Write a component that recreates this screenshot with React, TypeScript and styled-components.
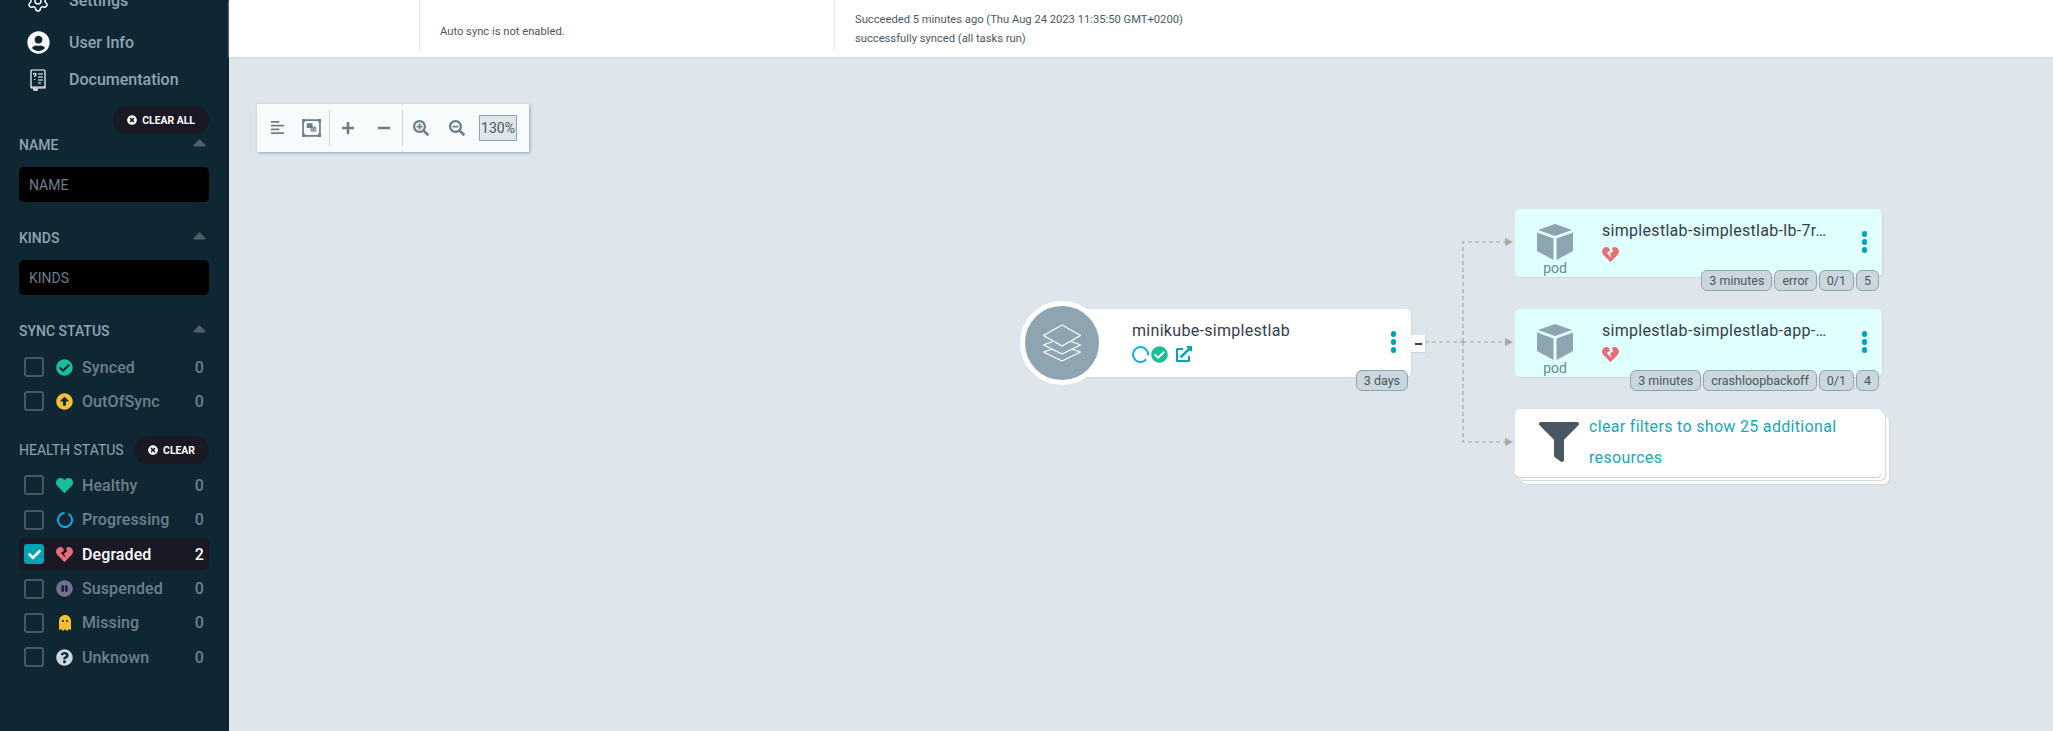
import React from 'react';
import styled, { createGlobalStyle } from 'styled-components';
import {
  FaAlignLeft,
  FaArrowAltCircleUp,
  FaCaretUp,
  FaCheck,
  FaCheckCircle,
  FaExternalLinkAlt,
  FaFilter,
  FaGhost,
  FaHeart,
  FaHeartBroken,
  FaMinus,
  FaPauseCircle,
  FaPlus,
  FaQuestionCircle,
  FaSearchMinus,
  FaSearchPlus,
  FaTimesCircle,
  FaUserCircle,
} from 'react-icons/fa';
import { Settings } from 'lucide-react';

const GlobalStyle = createGlobalStyle`
  html, body {
    margin: 0;
    padding: 0;
    height: 100%;
    overflow: hidden;
    font-family: Roboto, "Liberation Sans", sans-serif;
  }
  * { box-sizing: border-box; }
`;

const Page = styled.div`
  display: flex;
  width: 2053px;
  height: 731px;
  overflow: hidden;
  background: #dee6eb;
`;

const Sidebar = styled.aside`
  width: 229px;
  height: 731px;
  flex: none;
  overflow: hidden;
  padding: 0 20px 0 19px;
  background: #0f2733;
`;

const Menu = styled.nav`
  margin: -18px 0 0 -19px;
`;

const MenuItem = styled.div`
  display: flex;
  align-items: center;
  height: 37px;
  padding-left: 26px;
  color: #8fa4b1;
  font-size: 16px;
  font-weight: 500;
  &:first-child { margin-bottom: 5px; }
`;

const MenuIcon = styled.span`
  display: flex;
  justify-content: center;
  width: 24px;
  margin-right: 19px;
  color: #fff;
`;

const PillRow = styled.div`
  display: flex;
  justify-content: flex-end;
  margin-top: 8px;
`;

const Pill = styled.button`
  display: flex;
  align-items: center;
  gap: 5px;
  height: 28px;
  padding: 0 14px;
  border: 0;
  border-radius: 14px;
  background: #1a1825;
  color: #fff;
  font-family: inherit;
  font-size: 10.4px;
  font-weight: 700;
`;

const SectionHeader = styled.div<{ $top: number }>`
  display: flex;
  align-items: center;
  justify-content: space-between;
  height: 20px;
  margin-top: ${(p) => p.$top}px;
  color: #8fa4b1;
  font-size: 14px;
  font-weight: 500;
`;

const Caret = styled(FaCaretUp)`
  margin: -5px -1px 0 0;
  color: #4f5f6b;
`;

const HealthHeader = styled(SectionHeader)`
  height: 28px;
  font-weight: 400;
`;

const FilterInput = styled.input`
  display: block;
  width: 100%;
  height: 35px;
  margin-top: 12px;
  padding: 0 10px;
  border: 0;
  outline: 0;
  border-radius: 5px;
  background: #000;
  color: #fff;
  font-family: inherit;
  font-size: 14px;
  &::placeholder { color: #6d7f8b; opacity: 1; }
`;

const StatusList = styled.div<{ $top: number }>`
  display: flex;
  flex-direction: column;
  gap: 2.4px;
  margin-top: ${(p) => p.$top}px;
`;

const StatusRow = styled.div<{ $active?: boolean }>`
  display: flex;
  align-items: center;
  height: 32px;
  padding: 0 5px;
  border-radius: 5px;
  background: ${(p) => (p.$active ? '#1a1825' : 'transparent')};
  color: ${(p) => (p.$active ? '#fff' : '#6d7f8b')};
  font-size: 16px;
  font-weight: 500;
  letter-spacing: 0.1px;
`;

const Checkbox = styled.span<{ $checked?: boolean }>`
  display: flex;
  align-items: center;
  justify-content: center;
  width: 20px;
  height: 20px;
  flex: none;
  margin-right: 12px;
  border: ${(p) => (p.$checked ? '0' : '2px solid #495763')};
  border-radius: 3px;
  background: ${(p) => (p.$checked ? '#00a2b3' : 'transparent')};
  color: #fff;
`;

const StatusIcon = styled.span<{ $color: string }>`
  display: flex;
  justify-content: center;
  width: 17px;
  flex: none;
  margin-right: 9px;
  color: ${(p) => p.$color};
`;

const StatusLabel = styled.span`
  flex: 1;
`;

const Main = styled.main`
  display: flex;
  flex-direction: column;
  flex: 1;
  min-width: 0;
`;

const TopBar = styled.header`
  display: flex;
  height: 57px;
  flex: none;
  background: #fff;
  box-shadow: 0 1px 2px #ccd6dd;
  color: #495763;
  font-size: 11.2px;
`;

const TopGap = styled.div`
  width: 190px;
`;

const TopPanel = styled.div<{ $width: number; $top: number }>`
  width: ${(p) => p.$width}px;
  height: 50px;
  padding: ${(p) => p.$top}px 0 0 20px;
  border-left: 1px solid #dee6eb;
  line-height: 19px;
`;

const Canvas = styled.section`
  position: relative;
  flex: 1;
`;

const Toolbar = styled.div`
  display: flex;
  align-items: center;
  width: 272px;
  height: 48px;
  margin: 47px 0 0 28px;
  padding: 0 12px 1px;
  background: #f8fbfb;
  box-shadow: 1px 1px 3px #8fa4b1;
  color: #6d7f8b;
`;

const ToolButton = styled.span`
  display: flex;
  align-items: center;
  justify-content: center;
  width: 36px;
  height: 36px;
  flex: none;
`;

const NarrowToolButton = styled(ToolButton)`
  width: 24px;
  margin: 0 4px 0 -4px;
`;

const ToolDivider = styled.span`
  width: 1px;
  height: 36px;
  flex: none;
  background: #ccd6dd;
`;

const ZoomValue = styled.span`
  display: flex;
  align-items: center;
  justify-content: center;
  width: 40px;
  height: 26px;
  margin-left: 4px;
  border: 1px solid #8fa4b1;
  background: #dee6eb;
  color: #495763;
  font-size: 14px;
`;

const Edges = styled.svg`
  position: absolute;
  left: 0;
  top: 0;
  width: 1824px;
  height: 674px;
  pointer-events: none;
`;

const Node = styled.div<{ $x: number; $y: number; $w: number; $bg?: string }>`
  position: absolute;
  left: ${(p) => p.$x - 229}px;
  top: ${(p) => p.$y - 57}px;
  display: flex;
  width: ${(p) => p.$w}px;
  height: 68px;
  border-radius: 5px;
  background: ${(p) => p.$bg ?? '#fff'};
  box-shadow: 1px 1px 1px #ccd6dd;
`;

const StackedNode = styled(Node)`
  align-items: center;
  padding: 0 40px 2px 24px;
  box-shadow:
    0 1px 1px #c5d0d8,
    3px 3px 0 #fff,
    4px 4px 1px #ccd6dd,
    7px 7px 0 #fff,
    8px 8px 1px #ccd6dd;
`;

const AppCircle = styled.div`
  position: absolute;
  left: -42px;
  top: -8px;
  display: flex;
  align-items: center;
  justify-content: center;
  width: 84px;
  height: 84px;
  border: 5px solid #fff;
  border-radius: 50%;
  background: #8fa4b1;
`;

const PodIcon = styled.div`
  display: flex;
  flex-direction: column;
  align-items: center;
  width: 80px;
  padding: 14px 0 0 0;
  color: #6d8494;
  font-size: 14px;
  line-height: 14px;
  flex: none;
`;

const NodeInfo = styled.div<{ $left: number }>`
  flex: 1;
  min-width: 0;
  padding: 12px 0 0 ${(p) => p.$left}px;
`;

const NodeTitle = styled.div`
  overflow: hidden;
  color: #363c4a;
  font-size: 16px;
  line-height: 20px;
  letter-spacing: 0.3px;
  white-space: nowrap;
  text-overflow: ellipsis;
`;

const NodeStatus = styled.div`
  display: flex;
  align-items: center;
  gap: 2px;
  height: 20px;
  margin-top: 3px;
`;

const Dots = styled.div`
  display: flex;
  flex-direction: column;
  gap: 2.5px;
  flex: none;
  align-self: flex-start;
  margin: 22px 15px 0 0;
`;

const Dot = styled.span`
  width: 5.5px;
  height: 5.5px;
  border-radius: 50%;
  background: #00a2b3;
`;

const Tags = styled.div`
  position: absolute;
  right: 3px;
  bottom: -14px;
  display: flex;
  gap: 2px;
`;

const Tag = styled.span`
  display: flex;
  align-items: center;
  height: 21px;
  padding: 0 7px;
  border: 1px solid #8fa4b1;
  border-radius: 6px;
  background: #ccd6dd;
  color: #495763;
  font-size: 12.5px;
`;

const Collapse = styled.span`
  position: absolute;
  right: -14px;
  top: 26px;
  display: flex;
  align-items: center;
  justify-content: center;
  width: 14px;
  height: 17px;
  background: #fff;
  box-shadow: 1px 1px 1px #ccd6dd;
  &::before {
    content: '';
    width: 7px;
    height: 2px;
    background: #363c4a;
  }
`;

const FilterText = styled.div`
  margin-left: 10px;
  color: #18a6b8;
  font-size: 16px;
  line-height: 31px;
  letter-spacing: 0.32px;
`;

const OpenLink = styled(FaExternalLinkAlt)`
  margin-left: 6px;
  color: #00a2b3;
`;

const FunnelIcon = styled(FaFilter)`
  flex: none;
  color: #495763;
`;

const syncFilters = [
  { label: 'Synced', color: '#18be94', icon: <FaCheckCircle size={17} /> },
  { label: 'OutOfSync', color: '#f4c030', icon: <FaArrowAltCircleUp size={17} /> },
];

// spinner ring, the gap turns with the start angle
function Ring({ size, stroke, start }: { size: number; stroke: number; start: number }) {
  const r = (size - stroke) / 2;
  const c = 2 * Math.PI * r;
  return (
    <svg width={size} height={size} viewBox={`0 0 ${size} ${size}`}>
      <circle
        cx={size / 2}
        cy={size / 2}
        r={r}
        fill="none"
        stroke="#0dadea"
        strokeWidth={stroke}
        strokeDasharray={`${c * 0.9} ${c * 0.1}`}
        transform={`rotate(${start} ${size / 2} ${size / 2})`}
      />
    </svg>
  );
}

const healthFilters = [
  { label: 'Healthy', count: 0, color: '#18be94', icon: <FaHeart size={17} /> },
  { label: 'Progressing', count: 0, color: '#0dadea', icon: <Ring size={16} stroke={2} start={-60} /> },
  { label: 'Degraded', count: 2, color: '#e96d76', checked: true, icon: <FaHeartBroken size={17} /> },
  { label: 'Suspended', count: 0, color: '#766f94', icon: <FaPauseCircle size={17} /> },
  { label: 'Missing', count: 0, color: '#f4c030', icon: <FaGhost size={16} /> },
  { label: 'Unknown', count: 0, color: '#ccd6dd', icon: <FaQuestionCircle size={17} /> },
];

function CubeIcon() {
  return (
    <svg width="38" height="38" viewBox="0 0 38 38" fill="#8fa4b1">
      <path d="M19 1 L36 7 L19 13 L2 7 Z" />
      <path d="M1 9.5 L17.5 15.5 L17.5 37 L1 28 Z" />
      <path d="M37 9.5 L20.5 15.5 L20.5 37 L37 28 Z" />
    </svg>
  );
}

function LayersIcon() {
  return (
    <svg width="40" height="38" viewBox="0 0 40 38" fill="#8fa4b1" stroke="#fff" strokeWidth="1.2" strokeLinejoin="round">
      <path d="M20 22 L38.5 28 L20 37 L1.5 28 Z" />
      <path d="M20 14 L38.5 21 L20 30 L1.5 21 Z" />
      <path d="M20 1 L38.5 11.5 L20 22 L1.5 11.5 Z" />
    </svg>
  );
}

function FitIcon() {
  return (
    <svg width="19" height="18" viewBox="0 0 18 17" fill="currentColor">
      <path d="M1 1h16v15H1z" fill="none" stroke="currentColor" strokeWidth="1.6" />
      <rect x="0" y="0" width="3" height="3" />
      <rect x="15" y="0" width="3" height="3" />
      <rect x="0" y="14" width="3" height="3" />
      <rect x="15" y="14" width="3" height="3" />
      <rect x="4.5" y="4" width="5.5" height="4.5" />
      <rect x="8" y="7" width="5.5" height="5" opacity="0.75" />
    </svg>
  );
}

function DocIcon() {
  return (
    <svg width="16" height="22" viewBox="0 0 16 22" fill="none" stroke="#fff" strokeWidth="1.2">
      <path d="M2 1h12a1 1 0 0 1 1 1v17H2a1 1 0 0 1-1-1V2a1 1 0 0 1 1-1z" />
      <path d="M1 18h14M4 19v2.5l1.5-1 1.5 1V19" />
      <path d="M8 5h5M8 8h5M8 11h5M8 14h3" />
      <path d="M3.5 5.5c0-1.5 2.5-1.5 2.5 0 0 1-1.3 1-1.3 2.2M4.7 10v1" />
    </svg>
  );
}

function NodeDots() {
  return (
    <Dots>
      <Dot />
      <Dot />
      <Dot />
    </Dots>
  );
}

function PodNode({ y, name, tags }: { y: number; name: string; tags: string[] }) {
  return (
    <Node $x={1515} $y={y} $w={367} $bg="#e0ffff">
      <PodIcon>
        <CubeIcon />
        pod
      </PodIcon>
      <NodeInfo $left={7}>
        <NodeTitle>{name}</NodeTitle>
        <NodeStatus>
          <FaHeartBroken size={17} color="#e96d76" />
        </NodeStatus>
      </NodeInfo>
      <NodeDots />
      <Tags>
        {tags.map((t) => (
          <Tag key={t}>{t}</Tag>
        ))}
      </Tags>
    </Node>
  );
}

function App() {
  return (
    <Page>
      <GlobalStyle />
      <Sidebar>
        <Menu>
          <MenuItem>
            <MenuIcon><Settings size={24} strokeWidth={1.5} /></MenuIcon>
            Settings
          </MenuItem>
          <MenuItem>
            <MenuIcon><FaUserCircle size={23} /></MenuIcon>
            User Info
          </MenuItem>
          <MenuItem>
            <MenuIcon><DocIcon /></MenuIcon>
            Documentation
          </MenuItem>
        </Menu>

        <PillRow>
          <Pill><FaTimesCircle size={10} /> CLEAR ALL</Pill>
        </PillRow>

        <SectionHeader $top={1}>NAME <Caret size={21} /></SectionHeader>
        <FilterInput placeholder="NAME" readOnly />

        <SectionHeader $top={26}>KINDS <Caret size={21} /></SectionHeader>
        <FilterInput placeholder="KINDS" readOnly />

        <SectionHeader $top={26}>SYNC STATUS <Caret size={21} /></SectionHeader>
        <StatusList $top={10}>
          {syncFilters.map((f) => (
            <StatusRow key={f.label}>
              <Checkbox />
              <StatusIcon $color={f.color}>{f.icon}</StatusIcon>
              <StatusLabel>{f.label}</StatusLabel>
              0
            </StatusRow>
          ))}
        </StatusList>

        <HealthHeader $top={19}>
          HEALTH STATUS
          <Pill><FaTimesCircle size={10} /> CLEAR</Pill>
        </HealthHeader>
        <StatusList $top={5}>
          {healthFilters.map((f) => (
            <StatusRow key={f.label} $active={f.checked}>
              <Checkbox $checked={f.checked}>{f.checked && <FaCheck size={13} />}</Checkbox>
              <StatusIcon $color={f.color}>{f.icon}</StatusIcon>
              <StatusLabel>{f.label}</StatusLabel>
              {f.count}
            </StatusRow>
          ))}
        </StatusList>
      </Sidebar>

      <Main>
        <TopBar>
          <TopGap />
          <TopPanel $width={415} $top={22}>Auto sync is not enabled.</TopPanel>
          <TopPanel $width={500} $top={10}>
            <div>Succeeded 5 minutes ago (Thu Aug 24 2023 11:35:50 GMT+0200)</div>
            <div>successfully synced (all tasks run)</div>
          </TopPanel>
        </TopBar>

        <Canvas>
          <Toolbar>
            <NarrowToolButton><FaAlignLeft size={15} /></NarrowToolButton>
            <ToolButton><FitIcon /></ToolButton>
            <ToolDivider />
            <ToolButton><FaPlus size={14} /></ToolButton>
            <ToolButton><FaMinus size={14} /></ToolButton>
            <ToolDivider />
            <ToolButton><FaSearchPlus size={16} /></ToolButton>
            <ToolButton><FaSearchMinus size={16} /></ToolButton>
            <ZoomValue>130%</ZoomValue>
          </Toolbar>

          <Edges viewBox="229 57 1824 674">
            <path
              d="M1425 342H1463M1463 342V242H1506M1463 342V442H1506M1463 342H1506"
              fill="none"
              stroke="#9aa7b1"
              strokeWidth="1.2"
              strokeDasharray="4 3"
            />
            <path d="M1505 238l8 4-8 4zM1505 338l8 4-8 4zM1505 438l8 4-8 4z" fill="#a9a9a9" />
          </Edges>

          <Node $x={1062} $y={309} $w={349}>
            <AppCircle><LayersIcon /></AppCircle>
            <NodeInfo $left={70}>
              <NodeTitle>minikube-simplestlab</NodeTitle>
              <NodeStatus>
                <Ring size={17} stroke={2} start={40} />
                <FaCheckCircle size={17} color="#18be94" />
                <OpenLink size={16} />
              </NodeStatus>
            </NodeInfo>
            <NodeDots />
            <Tags><Tag>3 days</Tag></Tags>
            <Collapse />
          </Node>

          <PodNode y={209} name="simplestlab-simplestlab-lb-7r…" tags={['3 minutes', 'error', '0/1', '5']} />
          <PodNode y={309} name="simplestlab-simplestlab-app-…" tags={['3 minutes', 'crashloopbackoff', '0/1', '4']} />

          <StackedNode $x={1515} $y={409} $w={367}>
            <FunnelIcon size={40} />
            <FilterText>clear filters to show 25 additional resources</FilterText>
          </StackedNode>
        </Canvas>
      </Main>
    </Page>
  );
}

export default App;
